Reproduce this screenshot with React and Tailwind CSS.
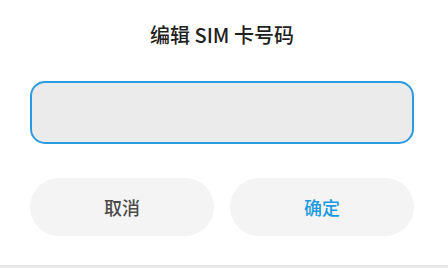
import React from "react";

const App = () => {
  return (
    <div
      className="w-[448px] h-[268px] bg-white flex flex-col overflow-hidden"
      style={{ fontFamily: '"Noto Sans CJK SC", "Noto Sans", sans-serif' }}
    >
      <div className="flex flex-col flex-1 w-[384px] ml-[30px]">
        <h2 className="h-[70px] pt-[20px] text-center text-[20px] leading-[30px] text-[#1f1f1f] font-medium">
          编辑 SIM 卡号码
        </h2>
        <div className="mt-[11px] h-[63px] rounded-[15px] border-2 border-[#2b9be0] bg-[#ebebeb]"></div>
        <div className="mt-[34px] grid grid-cols-2 gap-4">
          <button className="h-[58px] rounded-full bg-[#f4f4f4] text-[18px] font-medium text-[#4a4a4a]">
            取消
          </button>
          <button className="h-[58px] rounded-full bg-[#f4f4f4] text-[18px] font-medium text-[#1e9be0]">
            确定
          </button>
        </div>
      </div>
      <div className="h-[3px] bg-[#e8e8e8]"></div>
    </div>
  );
};

export default App;
